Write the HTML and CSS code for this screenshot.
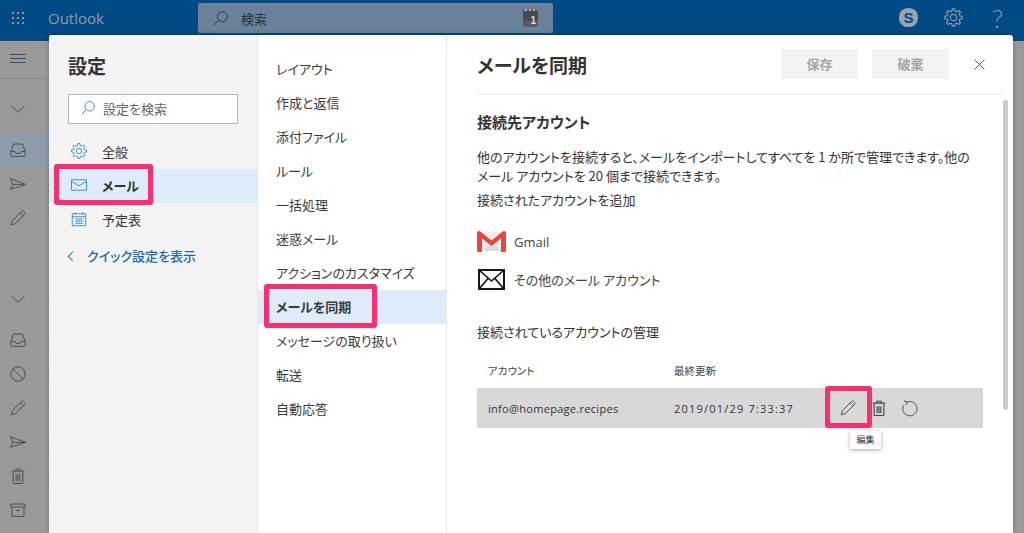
FILE: index.html
```html
<!DOCTYPE html>
<html lang="ja">
<head>
    <meta charset="UTF-8">
    <meta name="viewport" content="width=device-width, initial-scale=1.0">
    <title>Outlook 設定</title>
    <link rel="stylesheet" href="styles.css">
</head>
<body>
    <svg class="defs" width="0" height="0">
        <symbol id="i-gear" viewBox="0 0 24 24"><path d="M19.28 10.19L21.9 10.61V13.39L19.28 13.81L18.43 15.86L19.99 18.02L18.02 19.99L15.86 18.43L13.81 19.28L13.39 21.9H10.61L10.19 19.28L8.14 18.43L5.98 19.99L4.01 18.02L5.57 15.86L4.72 13.81L2.1 13.39V10.61L4.72 10.19L5.57 8.14L4.01 5.98L5.98 4.01L8.14 5.57L10.19 4.72L10.61 2.1H13.39L13.81 4.72L15.86 5.57L18.02 4.01L19.99 5.98L18.43 8.14Z"/><circle cx="12" cy="12" r="3.6"/></symbol>
        <symbol id="i-search" viewBox="0 0 24 24"><circle cx="14.5" cy="9.5" r="7"/><path d="M9.5 14.5L2.5 21.5"/></symbol>
        <symbol id="i-inbox" viewBox="0 0 24 24"><path d="M6 4h12l3.5 10v5a1.5 1.5 0 0 1-1.5 1.5H4A1.5 1.5 0 0 1 2.500 19v-5z"/><path d="M2.500 14H8l1.500 2.500h5L16 14h5.500"/></symbol>
        <symbol id="i-send" viewBox="0 0 24 24"><path d="M2 5L22.500 12.500L2 19L5 12.500Z"/><path d="M5 12.500H22.500"/></symbol>
        <symbol id="i-pencil" viewBox="0 0 24 24"><path d="M3 21L4.500 15.500L16.800 3.200a2 2 0 0 1 2.800 0l1.200 1.200a2 2 0 0 1 0 2.800L8.500 19.500z"/><path d="M15 5L19 9"/></symbol>
        <symbol id="i-chevron" viewBox="0 0 24 24"><path d="M3 7.500L12 16.500L21 7.500"/></symbol>
        <symbol id="i-ban" viewBox="0 0 24 24"><circle cx="12" cy="12" r="9.500"/><path d="M5.500 5.500L18.500 18.500"/></symbol>
        <symbol id="i-trash" viewBox="0 0 24 24"><path d="M5.500 6.500V21a1 1 0 0 0 1 1h11a1 1 0 0 0 1-1V6.500"/><path d="M3.500 5.500h17M9 5.500V3h6v2.500M9.500 9.500V19M12 9.500V19M14.500 9.500V19"/></symbol>
        <symbol id="i-archive" viewBox="0 0 24 24"><path d="M2.500 4h19v4h-19zM4 8v12.500h16V8M9.500 12.500h5"/></symbol>
        <symbol id="i-mail" viewBox="0 0 24 24"><path d="M2 5h20v14H2zM2 7l10 6 10-6"/></symbol>
        <symbol id="i-calendar" viewBox="0 0 24 24"><path d="M3 5h18v16H3zM3 9h18M7 3v3M17 3v3"/><path class="thin" d="M7 12h11M7 15h11M7 18h11M9 11v8M12 11v8M15 11v8"/></symbol>
        <symbol id="i-close" viewBox="0 0 24 24"><path d="M3 3L21 21M21 3L3 21"/></symbol>
        <symbol id="i-refresh" viewBox="0 0 24 24"><path d="M8 4.200A9.500 9.500 0 1 1 3.700 8"/><path d="M4 2.500L8.500 4L6.500 8"/></symbol>
    </svg>

    <header class="topbar">
        <div class="waffle">
            <i></i><i></i><i></i><i></i><i></i><i></i><i></i><i></i><i></i>
        </div>
        <div class="brand">Outlook</div>
        <div class="searchbar">
            <svg class="ico ico-search-top"><use href="#i-search"/></svg>
            <span>検索</span>
            <div class="kbd-badge"><b>1</b></div>
        </div>
        <div class="top-actions">
            <div class="skype">S</div>
            <svg class="ico ico-top"><use href="#i-gear"/></svg>
            <div class="help">?</div>
        </div>
    </header>

    <nav class="rail">
        <div class="rail-burger"><i></i><i></i><i></i></div>
        <div class="rail-row rail-first"><svg class="ico"><use href="#i-chevron"/></svg><span>お</span></div>
        <div class="rail-row rail-selected"><svg class="ico"><use href="#i-inbox"/></svg><span>受</span></div>
        <div class="rail-row"><svg class="ico"><use href="#i-send"/></svg><span>送</span></div>
        <div class="rail-row"><svg class="ico"><use href="#i-pencil"/></svg><span>下</span></div>
        <div class="rail-row rail-group"><svg class="ico"><use href="#i-chevron"/></svg><span>フ</span></div>
        <div class="rail-row rail-gap"><svg class="ico"><use href="#i-inbox"/></svg><span>受</span></div>
        <div class="rail-row"><svg class="ico"><use href="#i-ban"/></svg><span>迷</span></div>
        <div class="rail-row"><svg class="ico"><use href="#i-pencil"/></svg><span>下</span></div>
        <div class="rail-row"><svg class="ico"><use href="#i-send"/></svg><span>送</span></div>
        <div class="rail-row"><svg class="ico"><use href="#i-trash"/></svg><span>削</span></div>
        <div class="rail-row"><svg class="ico"><use href="#i-archive"/></svg><span>ア</span></div>
    </nav>

    <div class="dialog">
        <aside class="pane-left">
            <h2>設定</h2>
            <div class="settings-search">
                <svg class="ico ico-blue"><use href="#i-search"/></svg>
                <span>設定を検索</span>
            </div>
            <ul class="side-menu">
                <li><svg class="ico ico-blue"><use href="#i-gear"/></svg>全般</li>
                <li class="active">
                    <svg class="ico ico-blue"><use href="#i-mail"/></svg>メール
                    <div class="mark mark-mail"></div>
                </li>
                <li><svg class="ico ico-blue"><use href="#i-calendar"/></svg>予定表</li>
            </ul>
            <div class="quick-link"><span class="back-arrow"></span>クイック設定を表示</div>
        </aside>

        <ul class="pane-middle">
            <li>レイアウト</li>
            <li>作成と返信</li>
            <li>添付ファイル</li>
            <li>ルール</li>
            <li>一括処理</li>
            <li>迷惑メール</li>
            <li>アクションのカスタマイズ</li>
            <li class="active">メールを同期<div class="mark mark-sync"></div></li>
            <li>メッセージの取り扱い</li>
            <li>転送</li>
            <li>自動応答</li>
        </ul>

        <section class="pane-right">
            <div class="pane-head">
                <h2>メールを同期</h2>
                <button class="btn">保存</button>
                <button class="btn">破棄</button>
                <svg class="ico ico-close"><use href="#i-close"/></svg>
            </div>
            <div class="pane-body">
                <h3>接続先アカウント</h3>
                <p class="intro">他のアカウントを接続すると、メールをインポートしてすべてを 1 か所で管理できます。他の<br>メール アカウントを 20 個まで接続できます。</p>
                <p class="add-label">接続されたアカウントを追加</p>
                <div class="provider provider-gmail">
                    <svg class="provider-icon" viewBox="0 0 29 21">
                        <path fill="#ececec" d="M1 1h27v19H1z"/>
                        <path fill="#dcdcdc" d="M5 20L14.500 11 24 20z"/>
                        <path fill="#e2483d" d="M0 2a2 2 0 0 1 3.200-1.600L14.500 9.500 25.800.4A2 2 0 0 1 29 2v17.500a1.500 1.500 0 0 1-1.500 1.500H24V7.500l-9.500 7.500L5 7.500V21H1.500A1.500 1.500 0 0 1 0 19.500z"/>
                    </svg>
                    <span>Gmail</span>
                </div>
                <div class="provider provider-other">
                    <svg class="provider-icon" viewBox="0 0 27 21">
                        <path fill="#fff" stroke="#1a1426" stroke-width="2" d="M1 1h25v19H1z"/>
                        <path fill="none" stroke="#111" stroke-width="1.600" d="M1.500 1.500L13.500 12 25.500 1.500M1.500 19.500L10 9.500M25.500 19.500L17 9.500"/>
                    </svg>
                    <span>その他のメール アカウント</span>
                </div>
                <p class="manage-label">接続されているアカウントの管理</p>
                <div class="acc-head">
                    <span class="col-acc">アカウント</span>
                    <span>最終更新</span>
                </div>
                <div class="acc-row">
                    <span class="col-acc">info@homepage.recipes</span>
                    <span class="col-date">2019/01/29 7:33:37</span>
                    <div class="acc-actions">
                        <svg class="ico"><use href="#i-pencil"/></svg>
                        <svg class="ico ico-trash"><use href="#i-trash"/></svg>
                        <svg class="ico"><use href="#i-refresh"/></svg>
                    </div>
                    <div class="mark mark-edit"></div>
                    <div class="tooltip">編集</div>
                </div>
            </div>
            <div class="scroll-thumb"></div>
        </section>
    </div>
</body>
</html>
```

FILE: styles.css
```css
* {
    box-sizing: border-box;
}

html, body {
    height: 533px;
    overflow: hidden;
}

body {
    margin: 0;
    background: #999;
    color: #333;
    font-family: "Noto Sans CJK JP", "Open Sans", sans-serif;
    font-size: 13px;
    font-feature-settings: "palt";
    position: relative;
}

ul {
    list-style: none;
    margin: 0;
    padding: 0;
}

.defs {
    position: absolute;
}

.thin {
    stroke-width: 0.7;
}

/* Icons use stroke only */
.ico {
    width: 18px;
    height: 18px;
    fill: none;
    stroke: #4c4c4c;
    stroke-width: 1.3;
    flex: none;
}

.ico-blue {
    stroke: #1f7fc4;
}

/* Top bar */
.topbar {
    height: 41px;
    background: #004a86;
    display: flex;
    align-items: flex-start;
}

.waffle {
    width: 14px;
    margin: 12px 0 0 12px;
    display: grid;
    grid-template-columns: repeat(3, 2px);
    gap: 3px;
}

.waffle i {
    width: 2px;
    height: 2px;
    background: #8b98a6;
}

.brand {
    margin: 5px 0 0 22px;
    width: 150px;
    color: #8f9aa6;
    font-family: "Open Sans", sans-serif;
    font-size: 15px;
    line-height: 26px;
}

.searchbar {
    margin-top: 3px;
    width: 355px;
    height: 30px;
    background: #6a8199;
    border-radius: 2px;
    display: flex;
    align-items: center;
    padding-left: 14px;
    color: #26323d;
    font-size: 13px;
}

.ico-search-top {
    width: 17px;
    height: 17px;
    stroke: #26323d;
    margin-right: 12px;
}

.kbd-badge {
    margin-left: auto;
    margin-right: 15px;
    width: 15px;
    height: 18px;
    background: linear-gradient(#4a4a4a 60%, #5b5b5b 60%);
    border-top: 2px dotted #b5b5b5;
    border-radius: 2px;
    color: #ddd;
    font-family: "Liberation Sans", sans-serif;
    font-size: 10px;
    line-height: 10px;
    text-align: right;
    padding: 5px 2px 0 0;
}

.top-actions {
    margin-left: auto;
    display: flex;
    align-items: center;
    height: 35px;
}

.skype {
    width: 19px;
    height: 19px;
    margin-right: 25px;
    border-radius: 45%;
    background: #9aa3ad;
    color: #004a86;
    font-family: "Liberation Sans", sans-serif;
    font-weight: bold;
    font-size: 15px;
    line-height: 19px;
    text-align: center;
}

.ico-top {
    width: 21px;
    height: 21px;
    stroke: #8f9aa6;
    margin-right: 24px;
}

.help {
    width: 19px;
    margin-right: 17px;
    color: #8f9aa6;
    font-family: "Lato", sans-serif;
    font-weight: 300;
    font-size: 26px;
    line-height: 30px;
    text-align: center;
}

/* Dimmed navigation behind the dialog */
.rail {
    width: 49px;
}

.rail-burger {
    height: 38px;
    border-bottom: 1px solid #8d8d8d;
    padding: 13px 0 0 10px;
}

.rail-burger i {
    display: block;
    width: 16px;
    height: 1px;
    background: #35506b;
    margin-bottom: 3px;
}

.rail-row {
    height: 34px;
    display: flex;
    align-items: center;
    gap: 21px;
    padding-left: 9px;
    color: #333;
    font-size: 13px;
    white-space: nowrap;
}

.rail-first {
    margin-top: 13px;
}

.rail-selected {
    margin-top: 7px;
    background: #8c9cab;
}

.rail-group {
    margin-top: 47px;
}

.rail-gap {
    margin-top: 7px;
}

/* Settings dialog */
.dialog {
    position: absolute;
    left: 49px;
    top: 35px;
    width: 964px;
    height: 498px;
    background: #fff;
    border-radius: 3px 3px 0 0;
    box-shadow: 0 0 5px rgba(0, 0, 0, 0.25);
    display: flex;
    overflow: hidden;
}

.pane-left {
    width: 208px;
    background: #f3f3f3;
    padding-top: 17px;
}

.pane-left h2 {
    margin: 0 0 0 19px;
    font-size: 19px;
    line-height: 28px;
    font-weight: 700;
}

.settings-search {
    margin: 14px 0 0 19px;
    width: 170px;
    height: 30px;
    background: #fff;
    border: 1px solid #b5b5b5;
    display: flex;
    align-items: center;
    gap: 7px;
    padding: 0 0 2px 11px;
    color: #666;
    font-size: 13px;
}

.settings-search .ico {
    width: 16px;
    height: 16px;
}

.side-menu {
    margin-top: 11px;
}

.side-menu li {
    height: 34px;
    display: flex;
    align-items: center;
    gap: 14px;
    padding: 0 0 2px 21px;
    position: relative;
    font-size: 13px;
}

.side-menu li.active {
    background: #deecf9;
    font-weight: 700;
}

.side-menu .ico {
    width: 18px;
    height: 18px;
    stroke-width: 1.1;
}

.quick-link {
    margin: 10px 0 0 20px;
    display: flex;
    align-items: center;
    line-height: 18px;
    color: #1a6aa8;
    font-size: 13px;
    font-weight: 500;
}

.back-arrow {
    width: 7px;
    height: 7px;
    margin-right: 11px;
    border-left: 1px solid #1f7fc4;
    border-bottom: 1px solid #1f7fc4;
    transform: rotate(45deg);
}

.pane-middle {
    width: 190px;
    border-left: 1px solid #e6e6e6;
    border-right: 1px solid #e6e6e6;
    padding-top: 17px;
}

.pane-middle li {
    height: 34px;
    line-height: 34px;
    padding-left: 18px;
    position: relative;
    white-space: nowrap;
    color: #3a3a3a;
}

.pane-middle li.active {
    background: #deecf9;
    font-weight: 700;
}

.pane-right {
    flex: 1;
    position: relative;
    padding-left: 30px;
}

.pane-head {
    width: 526px;
    height: 60px;
    border-bottom: 1px solid #e6e6e6;
    display: flex;
    align-items: center;
    padding-bottom: 1px;
}

.pane-head h2 {
    margin: 0 auto 0 0;
    font-size: 19px;
    font-weight: 700;
}

.btn {
    width: 77px;
    height: 30px;
    margin-left: 14px;
    margin-bottom: 1px;
    border: 0;
    background: #f3f3f3;
    color: #a6a6a6;
    font-family: inherit;
    font-size: 13px;
    font-weight: 700;
}

.ico-close {
    width: 13px;
    height: 13px;
    margin: 0 17px 0 24px;
    stroke: #555;
    stroke-width: 1.800;
}

.pane-body {
    width: 506px;
    padding-top: 15px;
}

.pane-body h3 {
    margin: 0;
    font-size: 15px;
    line-height: 24px;
    font-weight: 700;
}

.pane-body p {
    margin: 0;
}

.intro {
    margin-top: 13px !important;
    line-height: 19px;
    font-size: 13px;
    white-space: nowrap;
}

.add-label {
    margin-top: 5px !important;
    line-height: 19px;
}

.provider {
    display: flex;
    align-items: center;
    gap: 8px;
    color: #444;
    font-size: 13px;
}

.provider-gmail {
    margin-top: 18px;
    height: 28px;
}

.provider-gmail span {
    font-family: "Open Sans", sans-serif;
    padding-top: 2px;
}

.provider-other {
    margin-top: 10px;
    height: 28px;
}

.provider-icon {
    width: 29px;
    height: 21px;
    flex: none;
}

.manage-label {
    margin-top: 29px !important;
    line-height: 19px;
}

.acc-head {
    margin-top: 21px;
    height: 18px;
    line-height: 18px;
    display: flex;
    font-size: 10.500px;
    color: #444;
}

.col-acc {
    width: 186px;
    margin-left: 11px;
}

.acc-row {
    margin-top: 8px;
    height: 40px;
    background: #d8d8d8;
    display: flex;
    align-items: center;
    position: relative;
    font-family: "Open Sans", sans-serif;
    font-size: 11px;
    letter-spacing: 0.3px;
    color: #333;
}

.col-date {
    width: 165px;
    letter-spacing: 1.200px;
}

.acc-actions {
    display: flex;
    align-items: center;
    gap: 13px;
}

.acc-actions .ico {
    stroke: #444;
    stroke-width: 1.200;
}

.ico-trash {
    stroke-width: 1.500 !important;
}

/* Pink callouts drawn on top of the screenshot */
.mark {
    position: absolute;
    border: 5px solid #ff2d6e;
    border-radius: 3px;
    pointer-events: none;
}

.mark-mail {
    left: 5px;
    top: -5px;
    width: 99px;
    height: 41px;
}

.mark-sync {
    left: 6px;
    top: -6px;
    width: 113px;
    height: 44px;
}

.mark-edit {
    left: 348px;
    top: -2px;
    width: 47px;
    height: 42px;
}

.tooltip {
    position: absolute;
    left: 373px;
    top: 43px;
    width: 31px;
    height: 18px;
    background: #fff;
    box-shadow: 0 1px 4px rgba(0, 0, 0, 0.35);
    font-family: "Noto Sans CJK JP", sans-serif;
    font-size: 9px;
    letter-spacing: 0;
    line-height: 18px;
    text-align: center;
}

.scroll-thumb {
    position: absolute;
    right: 5px;
    top: 65px;
    width: 5px;
    height: 310px;
    background: #c9c9c9;
    border-radius: 3px;
}
```
